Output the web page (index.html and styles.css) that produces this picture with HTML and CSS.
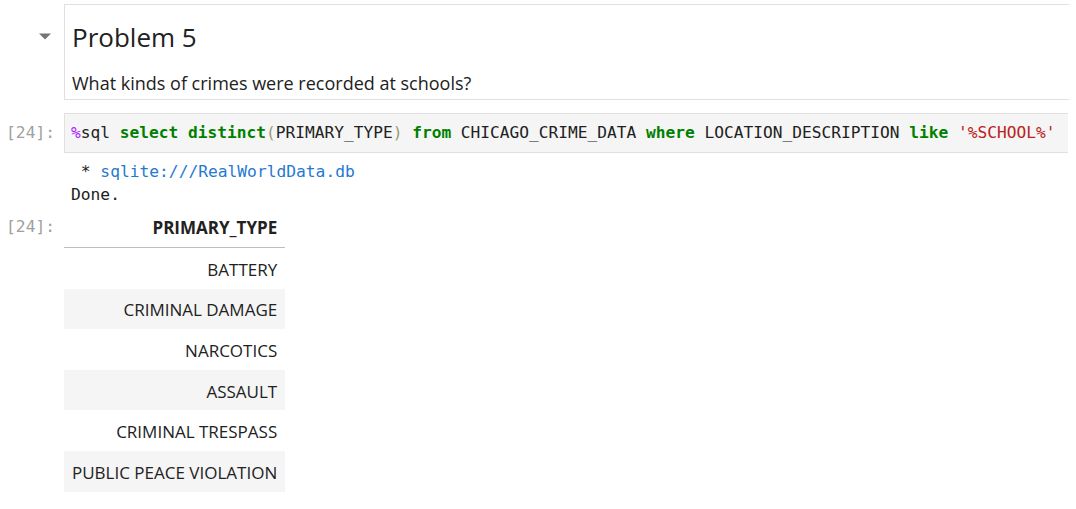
FILE: index.html
```html
<!DOCTYPE html>
<html>
<head>
<meta charset="utf-8">
<link rel="stylesheet" href="styles.css">
</head>
<body>
<div class="notebook">
  <div class="cell md-cell">
    <div class="gutter">
      <svg class="collapser" width="14" height="8" viewBox="0 0 14 8"><polygon points="1,1.5 13,1.5 7,7.5" fill="#757575"/></svg>
    </div>
    <div class="md-box">
      <h1 class="md-h1">Problem 5</h1>
      <p class="md-p">What kinds of crimes were recorded at schools?</p>
    </div>
  </div>

  <div class="cell code-cell">
    <div class="prompt">[24]:</div>
    <div class="code-box"><span class="c-magic">%</span>sql <span class="c-kw">select</span> <span class="c-kw">distinct</span><span class="c-br">(</span>PRIMARY_TYPE<span class="c-br">)</span> <span class="c-kw">from</span> CHICAGO_CRIME_DATA <span class="c-kw">where</span> LOCATION_DESCRIPTION <span class="c-kw">like</span> <span class="c-str">'%SCHOOL%'</span></div>
  </div>

  <div class="cell stream-cell">
    <div class="prompt"></div>
    <div class="stream"><div class="stream-line"> * <span class="c-link">sqlite:///RealWorldData.db</span></div><div class="stream-line">Done.</div></div>
  </div>

  <div class="cell out-cell">
    <div class="prompt out-prompt">[24]:</div>
    <table class="df">
      <thead><tr><th>PRIMARY_TYPE</th></tr></thead>
      <tbody>
        <tr><td>BATTERY</td></tr>
        <tr><td>CRIMINAL DAMAGE</td></tr>
        <tr><td>NARCOTICS</td></tr>
        <tr><td>ASSAULT</td></tr>
        <tr><td>CRIMINAL TRESPASS</td></tr>
        <tr><td>PUBLIC PEACE VIOLATION</td></tr>
      </tbody>
    </table>
  </div>
</div>
</body>
</html>
```

FILE: styles.css
```css
html, body {
  margin: 0;
  padding: 0;
  background: #ffffff;
}
body {
  font-family: "Open Sans", "Noto Sans", sans-serif;
  color: #212121;
  overflow: hidden;
}
.notebook {
  padding-top: 4px;
}
.cell {
  display: flex;
  align-items: flex-start;
}
.gutter, .prompt {
  width: 64px;
  flex: 0 0 64px;
  box-sizing: border-box;
}
.gutter {
  padding-top: 28px;
  padding-left: 38px;
}
.collapser {
  display: block;
}
.md-box {
  width: 1005px;
  box-sizing: border-box;
  border: 1px solid #e0e0e0;
  border-right: none;
  height: 96px;
  padding: 13px 7px 0 7px;
}
.md-h1 {
  margin: 0;
  font-weight: 400;
  font-size: 26px;
  line-height: 38px;
}
.md-p {
  margin: 15px 0 0 0;
  font-size: 18px;
  line-height: 24px;
}
.code-cell {
  margin-top: 13px;
}
.prompt {
  font-family: "DejaVu Sans Mono", monospace;
  font-size: 16.25px;
  color: #a0a0a0;
  text-align: right;
  padding-right: 9px;
  line-height: 20px;
}
.code-cell .prompt {
  padding-top: 10px;
}
.code-box {
  width: 1004px;
  box-sizing: border-box;
  height: 40px;
  background: #f5f5f5;
  border: 1px solid #e0e0e0;
  border-right: none;
  font-family: "DejaVu Sans Mono", monospace;
  font-size: 16.2px;
  line-height: 20px;
  padding: 9px 0 0 6px;
  white-space: pre;
  color: #212121;
}
.c-magic { color: #aa22ff; }
.c-kw { color: #008000; font-weight: bold; }
.c-br { color: #999977; }
.c-str { color: #ba2121; }
.c-link { color: #1f7ad0; }
.stream-cell {
  margin-top: 7px;
}
.stream {
  font-family: "DejaVu Sans Mono", monospace;
  font-size: 16.25px;
  line-height: 23px;
  padding-left: 7px;
  white-space: pre;
  color: #212121;
}
.out-cell {
  margin-top: 9px;
}
.out-prompt {
  padding-top: 2px;
}
.df {
  border-collapse: collapse;
  font-size: 17px;
  color: #212121;
}
.df th, .df td {
  text-align: right;
  padding: 0 8px 0 8px;
  white-space: nowrap;
}
.df th {
  font-weight: bold;
  height: 31px;
  vertical-align: top;
  padding-top: 1px;
  border-bottom: 1px solid #bdbdbd;
}
.df td {
  height: 38.6px;
  padding-top: 2px;
  vertical-align: middle;
}
.df tbody tr:nth-child(even) {
  background: #f5f5f5;
}
```
